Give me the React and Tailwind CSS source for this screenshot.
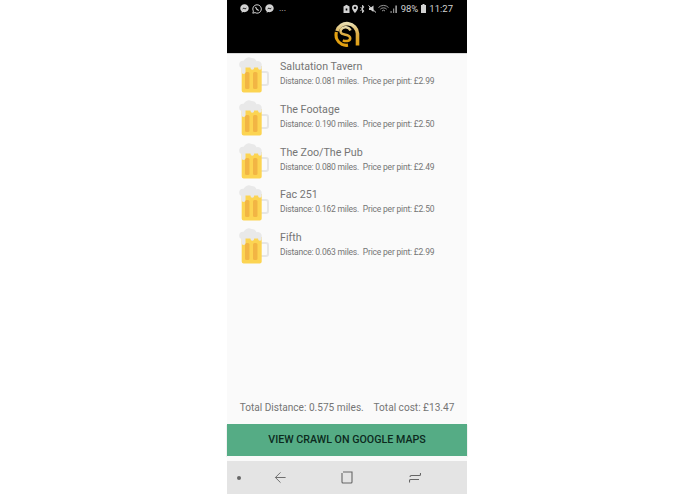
const pubs = [
  { name: "Salutation Tavern", distance: "0.081", price: "2.99" },
  { name: "The Footage", distance: "0.190", price: "2.50" },
  { name: "The Zoo/The Pub", distance: "0.080", price: "2.49" },
  { name: "Fac 251", distance: "0.162", price: "2.50" },
  { name: "Fifth", distance: "0.063", price: "2.99" },
];

const BeerIcon = () => (
  <svg className="w-[32px] h-[38px] shrink-0" viewBox="0 0 32 38">
    <path d="M23 15h5a2 2 0 0 1 2 2v9a2 2 0 0 1-2 2H23" fill="none" stroke="#e6e6e6" strokeWidth="2" />
    <path d="M3.700 9h20v24.500a2 2 0 0 1-2 2h-16a2 2 0 0 1-2-2z" fill="#fcd452" />
    <rect x="7" y="15" width="4.500" height="17" rx="1.500" fill="#f2b544" />
    <rect x="15" y="15" width="4.500" height="17" rx="1.500" fill="#f2b544" />
    <path d="M3.700 15V11a3.500 3.500 0 0 1-2.500-4 4 4 0 0 1 4.500-3.200A5.500 5.500 0 0 1 13.500 1a5 5 0 0 1 5 3.300A3.800 3.800 0 0 1 23.700 8v3a1.800 1.800 0 0 1-3.600 0v-.5h-4v.5a1.800 1.800 0 0 1-3.600 0v-.5h-5v4.500a1.900 1.900 0 0 1-3.800 0z" fill="#e9e9e9" />
  </svg>
);

const Messenger = () => (
  <svg className="w-[9px] h-[9px]" viewBox="0 0 10 10">
    <path d="M5 .4C2.300.4.300 2.300.300 4.800c0 1.400.6 2.500 1.600 3.300v1.600l1.500-.8c.5.1 1 .2 1.600.2 2.700 0 4.700-1.900 4.700-4.300S7.700.4 5 .4z" fill="#d2d2d2" />
    <path d="M2.200 6.200 4.300 4l1.200 1.100L7.800 3.800 5.700 6 4.500 4.900z" fill="#000" />
  </svg>
);

const StatusBar = () => (
  <div className="h-[17px] flex items-center justify-between pl-[13px] pr-[14px] text-[#d2d2d2]">
    <div className="flex items-center gap-[3px]">
      <Messenger />
      <svg className="w-[10px] h-[10px]" viewBox="0 0 10 10">
        <path d="M5 .8a4.200 4.200 0 0 0-3.600 6.300L.8 9.200l2.200-.6A4.200 4.200 0 1 0 5 .8z" fill="none" stroke="#d2d2d2" strokeWidth="1" />
        <path d="M3.500 3c.7 2 1.600 2.900 3.300 3.500" fill="none" stroke="#d2d2d2" strokeWidth="1.100" />
      </svg>
      <Messenger />
      <span className="text-[9px] leading-none ml-[2px]">...</span>
    </div>
    <div className="flex items-center gap-[1px]">
      <svg className="w-[34px] h-[10px]" viewBox="0 0 34 10" fill="#d2d2d2">
        <path d="M.5 2.500 3.500.8 6.500 2.500V9H.5z" />
        <rect x="2.700" y="4.500" width="1.600" height="2" fill="#000" />
        <path d="M12 .8a3 3 0 0 0-3 3c0 2 3 5.400 3 5.400s3-3.400 3-5.400a3 3 0 0 0-3-3zm0 1.700a1.300 1.300 0 1 1 0 2.600 1.300 1.300 0 0 1 0-2.600z" />
        <path d="M17.500 3 21 7 19.500 8.800V1.200L21 3 17.500 7" fill="none" stroke="#d2d2d2" strokeWidth=".9" />
        <path d="M26 3.500h1.800L30.500 1.500v6.500L27.800 6H26z" />
        <path d="M25.500 1.500 33 8.500" stroke="#d2d2d2" strokeWidth="1" />
      </svg>
      <svg className="w-[20px] h-[10px] mr-[2px]" viewBox="0 0 20 10" fill="none">
        <path d="M.5 3.500a7 7 0 0 1 10 0M2.300 5.200a4.500 4.500 0 0 1 6.400 0M4 7a2 2 0 0 1 3 0" stroke="#a8a8a8" strokeWidth=".9" />
        <rect x="12.500" y="7" width="1.200" height="2" fill="#8a8a8a" />
        <rect x="15" y="4.500" width="1.200" height="4.500" fill="#8a8a8a" />
        <rect x="17.500" y="1.500" width="1.200" height="7.500" fill="#d2d2d2" />
      </svg>
      <span className="text-[9.500px] leading-none">98%</span>
      <svg className="w-[5px] h-[9px] mx-[2px]" viewBox="0 0 5 9" fill="#d2d2d2">
        <path d="M1.500 0h2v1H5v8H0V1h1.500z" />
      </svg>
      <span className="text-[9.500px] leading-none">11:27</span>
    </div>
  </div>
);

const Logo = () => (
  <svg className="w-[27px] h-[27px]" viewBox="0 0 27 27" fill="none">
    <defs>
      <linearGradient id="gold" x1="0" y1="0" x2="0" y2="1">
        <stop offset="0" stopColor="#e8dcae" />
        <stop offset=".45" stopColor="#dcae4a" />
        <stop offset="1" stopColor="#e2a011" />
      </linearGradient>
    </defs>
    <path d="M23.500 24.500V12.500A10.500 10.500 0 0 0 3 10" stroke="url(#gold)" strokeWidth="3.600" />
    <path d="M16.500 9.500A5.500 5.500 0 0 0 7 8.500c-1.300 2.300 0 4.300 2.800 4.800 3.200.6 6.600 1 6.400 4-.2 3-4.700 3.300-7.400 2" stroke="url(#gold)" strokeWidth="2.600" />
    <path d="M2.400 11c-1.200 5 .8 10 5.600 12.400 2 .9 4 1.100 6 .8" stroke="#e2a011" strokeWidth="3.200" />
  </svg>
);

const PubRow = ({ pub }) => (
  <div className="h-[42.750px] flex items-start pl-[11px]">
    <BeerIcon />
    <div className="ml-[10px] pt-[3px]">
      <h2 className="text-[10.700px] leading-[14px] text-[#757575]">{pub.name}</h2>
      <p className="mt-[1px] text-[8.500px] tracking-[-0.2px] leading-[12px] text-[#757575] whitespace-pre">
        Distance: {pub.distance} miles.  Price per pint: £{pub.price}
      </p>
    </div>
  </div>
);

const NavBar = () => (
  <div className="h-[33px] bg-[#e4e4e4] flex items-center pl-[10px]">
    <div className="w-[4px] h-[4px] rounded-full bg-[#666]"></div>
    <svg className="w-[13px] h-[13px] ml-[33px]" viewBox="0 0 14 14" fill="none" stroke="#666" strokeWidth="1">
      <path d="M7 1.500 1.500 7 7 12.500M1.500 7h11" />
    </svg>
    <svg className="w-[12px] h-[13px] ml-[54px]" viewBox="0 0 12 13" fill="none" stroke="#666" strokeWidth="1.100">
      <path d="M1 2V11a1 1 0 0 0 1 1h8a1 1 0 0 0 1-1V1H2" />
    </svg>
    <svg className="w-[12px] h-[13px] ml-[56px]" viewBox="0 0 12 13" fill="none" stroke="#666" strokeWidth="1.100">
      <path d="M11.500 2V3.500a1 1 0 0 1-1 1H2.500a1.500 1.500 0 0 0-1.500 1.500M.5 11.500V9.500a1 1 0 0 1 1-1H10" />
    </svg>
  </div>
);

export default function App() {
  return (
    <div className="w-[695px] h-[494px] bg-white pl-[227px] font-['Roboto',sans-serif]">
      <div className="w-[240px] h-full flex flex-col bg-[#fafafa]">
        <header className="h-[53px] bg-black shrink-0">
          <StatusBar />
          <div className="flex justify-center pt-[4px]">
            <Logo />
          </div>
        </header>
        <div className="h-[1px] bg-[#d8d8d8]"></div>
        <main className="flex-1 pt-[3px]">
          {pubs.map((pub) => (
            <PubRow key={pub.name} pub={pub} />
          ))}
        </main>
        <p className="text-[10.100px] leading-[14px] text-[#757575] text-center whitespace-pre mb-[9px]">
          Total Distance: 0.575 miles.    Total cost: £13.47
        </p>
        <button className="h-[32px] bg-[#55ac85] shadow-[0_1px_1px_rgba(0,0,0,0.3)] text-[10.700px] font-medium text-[#0c2a1e]">
          VIEW CRAWL ON GOOGLE MAPS
        </button>
        <div className="h-[5px] bg-[#fafafa]"></div>
        <NavBar />
      </div>
    </div>
  );
}
